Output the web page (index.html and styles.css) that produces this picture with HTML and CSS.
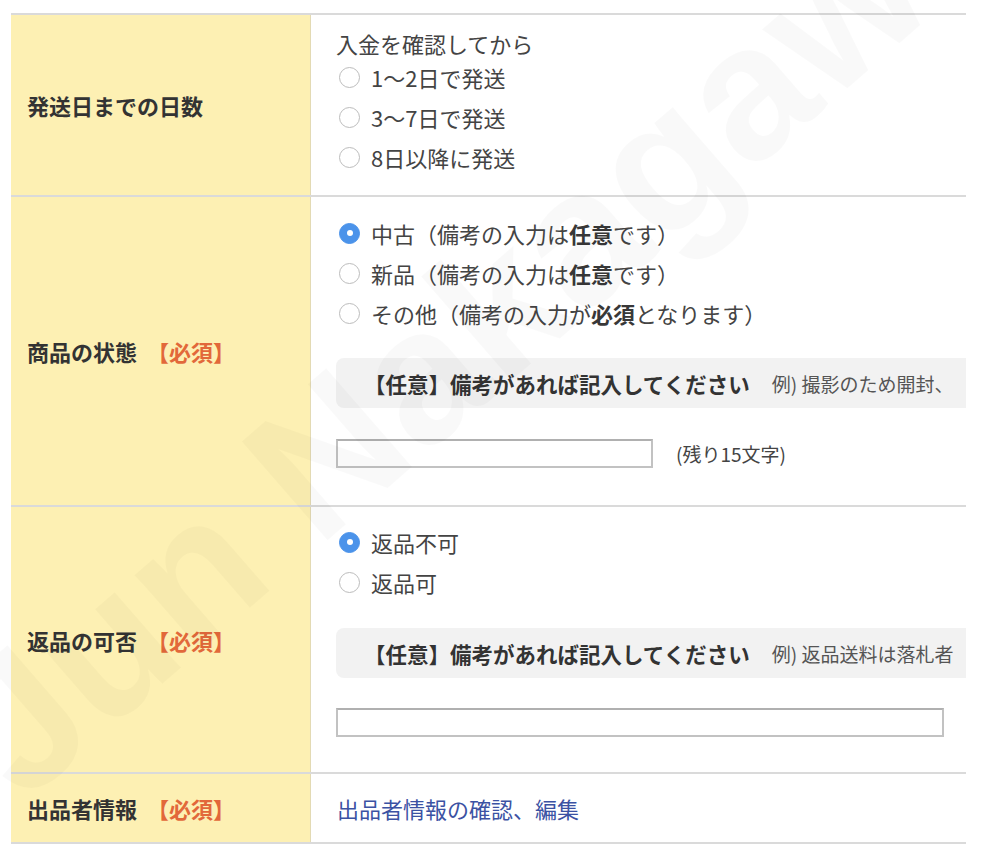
FILE: index.html
```html
<!DOCTYPE html>
<html lang="ja">
<head>
<meta charset="utf-8">
<title>出品フォーム</title>
<link rel="stylesheet" href="styles.css">
</head>
<body>
<div class="page">
  <div class="form">
    <div class="row">
      <div class="label">発送日までの日数</div>
      <div class="content c1">
        <div class="note">入金を確認してから</div>
        <label class="radio"><span class="dot"></span>1〜2日で発送</label>
        <label class="radio"><span class="dot"></span>3〜7日で発送</label>
        <label class="radio"><span class="dot"></span>8日以降に発送</label>
      </div>
    </div>
    <div class="row">
      <div class="label">商品の状態<span class="req">【必須】</span></div>
      <div class="content c2">
        <label class="radio"><span class="dot on"></span>中古（備考の入力は<b>任意</b>です）</label>
        <label class="radio"><span class="dot"></span>新品（備考の入力は<b>任意</b>です）</label>
        <label class="radio"><span class="dot"></span>その他（備考の入力が<b>必須</b>となります）</label>
        <div class="memo"><span class="memo-title">【任意】備考があれば記入してください</span><span class="memo-ex">例) 撮影のため開封、</span></div>
        <div class="field"><span class="input short"></span><span class="count">(残り15文字)</span></div>
      </div>
    </div>
    <div class="row">
      <div class="label">返品の可否<span class="req">【必須】</span></div>
      <div class="content c3">
        <label class="radio"><span class="dot on"></span>返品不可</label>
        <label class="radio"><span class="dot"></span>返品可</label>
        <div class="memo"><span class="memo-title">【任意】備考があれば記入してください</span><span class="memo-ex">例) 返品送料は落札者</span></div>
        <div class="field"><span class="input long"></span></div>
      </div>
    </div>
    <div class="row">
      <div class="label">出品者情報<span class="req">【必須】</span></div>
      <div class="content c4">
        <a class="link" href="#">出品者情報の確認、編集</a>
      </div>
    </div>
  </div>
  <div class="watermark">Jun Nakagawa</div>
</div>
</body>
</html>
```

FILE: styles.css
```css
html, body {
  margin: 0;
  padding: 0;
  background: #ffffff;
}

body {
  font-family: "Noto Sans CJK JP", "Noto Sans", sans-serif;
  color: #3a3a3a;
}

.page {
  position: relative;
  width: 966px;
  height: 852px;
  padding: 13px 0 0 11px;
  box-sizing: border-box;
  overflow: hidden;
}

.form {
  width: 955px;
  overflow: hidden;
  border-bottom: 2px solid #dadada;
}

.row {
  display: flex;
  border-top: 2px solid #dadada;
}

.label {
  width: 300px;
  flex: none;
  box-sizing: border-box;
  background: #fdf0b3;
  border-right: 1px solid #e3dab4;
  display: flex;
  align-items: center;
  padding-left: 16px;
  font-size: 22px;
  font-weight: bold;
  color: #333333;
  white-space: nowrap;
}

.req {
  color: #e2683a;
  margin-left: 10px;
}

.content {
  flex: 1;
  min-width: 0;
  padding-left: 25px;
  font-size: 22px;
  color: #444444;
}

.c1 { padding-top: 14px; padding-bottom: 18px; }
.c2 { padding-top: 16px; padding-bottom: 37px; }
.c3 { padding-top: 15px; padding-bottom: 35px; }
.c4 {
  height: 68px;
  display: flex;
  align-items: center;
  padding-left: 26px;
}

.note {
  line-height: 28px;
  height: 28px;
}

.radio {
  display: flex;
  align-items: center;
  height: 40px;
  white-space: nowrap;
}

.radio b {
  font-weight: bold;
  color: #383838;
}

.dot {
  width: 21px;
  height: 21px;
  box-sizing: border-box;
  border: 1.5px solid #bcbcbc;
  border-radius: 50%;
  background: #ffffff;
  margin-left: 3px;
  margin-right: 11px;
  flex: none;
  display: flex;
  align-items: center;
  justify-content: center;
}

.dot.on {
  background: #4b93ea;
  border-color: #4b93ea;
}

.dot.on::after {
  content: "";
  width: 6px;
  height: 6px;
  border-radius: 50%;
  background: #ffffff;
}

.memo {
  height: 50px;
  background: #f2f2f2;
  border-radius: 8px 0 0 8px;
  display: flex;
  align-items: center;
  padding-left: 28px;
  white-space: nowrap;
  overflow: hidden;
}

.c2 .memo { margin-top: 25px; }
.c3 .memo { margin-top: 26px; }

.memo-title {
  font-size: 21.5px;
  font-weight: bold;
  color: #333333;
}

.memo-ex {
  font-size: 19px;
  color: #555555;
  margin-left: 22px;
}

.field {
  display: flex;
  align-items: center;
  height: 29px;
}

.c2 .field { margin-top: 31px; }
.c3 .field { margin-top: 30px; }

.input {
  height: 29px;
  box-sizing: border-box;
  border: 2px solid #c2c2c2;
  border-top-color: #b0b0b0;
  background: #ffffff;
  display: block;
}

.input.short { width: 317px; }
.input.long { width: 608px; }

.count {
  font-size: 19px;
  color: #444444;
  margin-left: 23px;
}

.link {
  color: #3b52a3;
  text-decoration: none;
  font-size: 22px;
}

.watermark {
  position: absolute;
  left: -20px;
  top: 660px;
  font-family: "Liberation Sans", sans-serif;
  font-weight: bold;
  font-size: 190px;
  line-height: 1;
  color: rgba(0, 0, 0, 0.025);
  white-space: nowrap;
  transform: rotate(-41deg);
  transform-origin: 0 50%;
  pointer-events: none;
}
```
